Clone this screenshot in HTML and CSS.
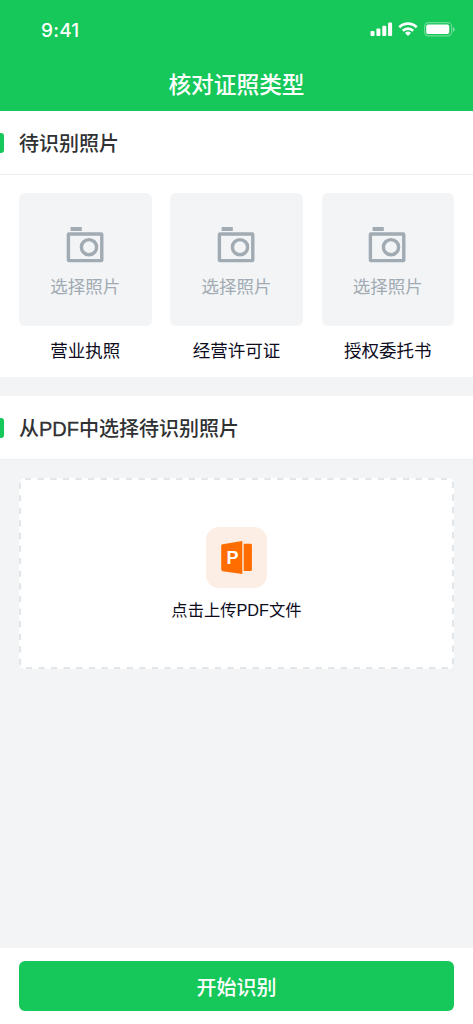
FILE: index.html
```html
<!DOCTYPE html>
<html lang="zh-CN">
<head>
<meta charset="UTF-8">
<meta name="viewport" content="width=device-width, initial-scale=1">
<title>核对证照类型</title>
<link rel="stylesheet" href="styles.css">
</head>
<body>
<svg class="defs" width="0" height="0" aria-hidden="true">
  <symbol id="camera" viewBox="0 0 38 36">
    <path d="M4.600 0h11.200v4H4.600z" fill="#a1abb3"/>
    <rect x="2.400" y="7" width="33.400" height="26.600" rx="0.600" fill="none" stroke="#a1abb3" stroke-width="3.400"/>
    <circle cx="23" cy="20.200" r="7.600" fill="none" stroke="#a1abb3" stroke-width="3.400"/>
  </symbol>
</svg>
<div class="screen">
  <header class="header">
    <div class="status">
      <span class="time">9:41</span>
      <svg class="signals" width="86" height="16" viewBox="0 0 86 16" fill="#fff">
        <rect x="0.500" y="10" width="4" height="5" rx="1.100"/>
        <rect x="6.400" y="7.500" width="4" height="7.500" rx="1.100"/>
        <rect x="12.300" y="4.800" width="4" height="10.200" rx="1.100"/>
        <rect x="18.100" y="1.600" width="4" height="13.400" rx="1.100"/>
        <g fill="none" stroke="#fff" stroke-width="2.700">
          <path d="M29.300 6.200a12.400 12.400 0 0 1 17.400 0"/>
          <path d="M32.800 9.800a7.400 7.400 0 0 1 10.400 0"/>
        </g>
        <path d="M38 15.100l-3-3.100a4.400 4.400 0 0 1 6 0z"/>
        <rect x="54.600" y="1.700" width="27" height="13.200" rx="3.800" fill="none" stroke="#fff" stroke-opacity=".38" stroke-width="1.200"/>
        <rect x="56.200" y="3.500" width="23" height="9.600" rx="1.900"/>
        <path d="M83 6v5c1-.4 1.700-1.400 1.700-2.500S84 6.400 83 6z" fill-opacity=".45"/>
      </svg>
    </div>
    <h1 class="title">核对证照类型</h1>
  </header>

  <section class="photos">
    <h2 class="section-title"><span class="heading">待识别照片</span></h2>
    <div class="grid">
      <div class="item">
        <div class="picker"><svg class="camera"><use href="#camera"/></svg><span>选择照片</span></div>
        <div class="label">营业执照</div>
      </div>
      <div class="item">
        <div class="picker"><svg class="camera"><use href="#camera"/></svg><span>选择照片</span></div>
        <div class="label">经营许可证</div>
      </div>
      <div class="item">
        <div class="picker"><svg class="camera"><use href="#camera"/></svg><span>选择照片</span></div>
        <div class="label">授权委托书</div>
      </div>
    </div>
  </section>

  <section class="pdf">
    <h2 class="section-title"><span class="heading">从<span class="latin">PDF</span>中选择待识别照片</span></h2>
    <div class="upload">
      <svg class="outline" viewBox="0 0 435 191"><rect x="0" y="0" width="435" height="191" rx="6" fill="#fff"/><rect x="1" y="1" width="433" height="189" rx="5" fill="none" stroke="#e1e6ea" stroke-width="2.200" stroke-dasharray="6.300 6.300"/></svg>
      <div class="file-icon">
        <svg width="32" height="34" viewBox="0 0 32 34">
          <path d="M1.600 3.200L21.300.1v33L1.600 30.200Q.2 30 .2 28.600V4.600Q.2 3.400 1.600 3.200z" fill="#ff6d00"/>
          <path d="M22.700 2.700h6.800q1.400 0 1.400 1.400v24.600q0 1.400-1.400 1.400h-6.800z" fill="#ff6d00"/>
          <text class="file-letter" x="5.600" y="22.800">P</text>
        </svg>
      </div>
      <div class="upload-text">点击上传PDF文件</div>
    </div>
  </section>

  <footer class="footer"><button class="submit" type="button">开始识别</button></footer>
</div>
</body>
</html>
```

FILE: styles.css
```css
* { box-sizing: border-box; }
body {
  margin: 0;
  background: #f3f4f6;
  font-family: "Liberation Sans", "Noto Sans CJK SC", sans-serif;
}
.defs { display: block; position: absolute; }
.screen { display: flex; flex-direction: column; height: 1024px; }
.header { height: 111px; background: #16c75a; color: #fff; }
.status {
  display: flex;
  justify-content: space-between;
  align-items: center;
  height: 59px;
  padding: 2px 17px 0 41px;
}
.time { font: 500 19px/24px Inter, sans-serif; letter-spacing: 0.2px; }
.signals { display: block; margin-top: -4px; }
.title {
  margin: 0;
  font-size: 22.7px;
  font-weight: 500;
  line-height: 52px;
  text-align: center;
}
.photos { height: 266px; background: #fff; }
.section-title {
  display: flex;
  align-items: center;
  height: 64px;
  margin: 0;
  padding-top: 1px;
  border-bottom: 1px solid #e9eef2;
  background: #fff;
  color: #303133;
  font-size: 20px;
  font-weight: 500;
  line-height: 32px;
}
.section-title::before {
  content: "";
  width: 4px;
  height: 20px;
  margin-right: 15px;
  border-radius: 0 3px 3px 0;
  background: #16c75a;
}
.heading { padding-top: 2px; }
.latin { -webkit-text-stroke: 0.3px #303133; }
.grid {
  display: grid;
  grid-template-columns: repeat(3, 132.5px);
  justify-content: space-between;
  padding: 18px 19px 0;
}
.picker {
  display: flex;
  flex-direction: column;
  align-items: center;
  height: 132.5px;
  padding-top: 34px;
  border-radius: 6px;
  background: #f3f4f6;
  color: #a1abb3;
  font-size: 17.5px;
  line-height: 26px;
}
.camera { width: 38px; height: 36px; margin: 0 1px 11px 0; }
.label {
  margin-top: 12px;
  color: #0b0b1c;
  font-size: 17.5px;
  line-height: 26px;
  text-align: center;
}
.pdf { margin-top: 19px; }
.upload {
  position: relative;
  display: flex;
  flex-direction: column;
  align-items: center;
  height: 191px;
  margin: 18px 19px 0;
  padding-top: 49px;
}
.outline { position: absolute; inset: 0; width: 100%; height: 100%; }
.file-icon {
  position: relative;
  display: flex;
  align-items: center;
  justify-content: center;
  width: 61px;
  height: 61px;
  border-radius: 13px;
  background: #fceee4;
}
.file-letter { fill: #fff; font: 700 18px "Liberation Sans", sans-serif; }
.upload-text {
  position: relative;
  margin-top: 9px;
  color: #0b0b1c;
  font-size: 16.3px;
  line-height: 26px;
}
.footer { height: 76px; margin-top: auto; padding: 13px 19px; background: #fff; }
.submit {
  display: block;
  width: 100%;
  height: 50px;
  padding: 1px 0 0;
  border: 0;
  border-radius: 6px;
  background: #16c75a;
  color: #fff;
  font: 500 20px/50px "Noto Sans CJK SC", sans-serif;
}
```
